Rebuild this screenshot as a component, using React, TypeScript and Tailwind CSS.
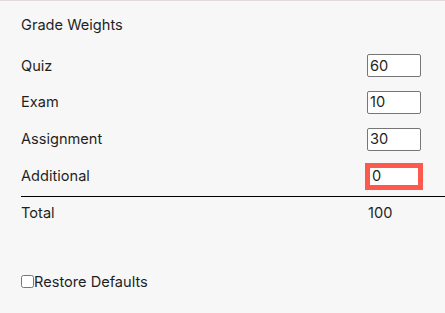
import React from 'react';

const weights = [
  { label: 'Quiz', value: '60' },
  { label: 'Exam', value: '10' },
  { label: 'Assignment', value: '30' },
];

export default function App() {
  return (
    <div className="w-[445px] h-[313px] overflow-hidden bg-[#f7f7f7] text-[#1f1f1f] font-['Inter',sans-serif] text-[14.6px] leading-[20px]">
      <div className="h-px bg-[#e3d9d9]" />
      <div className="pl-[21px] pt-[14px]">
        <h2 className="h-[20px] font-normal">Grade Weights</h2>

        <div className="mt-[12.3px] w-[400px]">
          {weights.map((w) => (
            <div key={w.label} className="h-[36.8px] flex items-center justify-between">
              <span>{w.label}</span>
              <input
                type="text"
                defaultValue={w.value}
                className="w-[54px] h-[23px] px-[2px] bg-white border border-[#767676] rounded-[2px] text-[14.6px] outline-none"
              />
            </div>
          ))}
          <div className="h-[36.8px] flex items-center justify-between">
            <span>Additional</span>
            <input
              type="text"
              defaultValue="0"
              className="w-[54px] h-[23px] px-[2px] bg-white border-[3px] border-[#fd5a4d] outline-2 outline-solid outline-[#fd5a4d] text-[14.6px]"
            />
          </div>
        </div>

        <div className="mt-[1.5px] h-px bg-black" />

        <div className="mt-[6.4px] w-[400px] flex justify-between h-[20px]">
          <span>Total</span>
          <span className="w-[54px] pl-[1px]">100</span>
        </div>

        <label className="mt-[48.4px] h-[20px] flex items-center">
          <input type="checkbox" className="w-[13px] h-[13px]" />
          <span>Restore Defaults</span>
        </label>
      </div>
    </div>
  );
}
